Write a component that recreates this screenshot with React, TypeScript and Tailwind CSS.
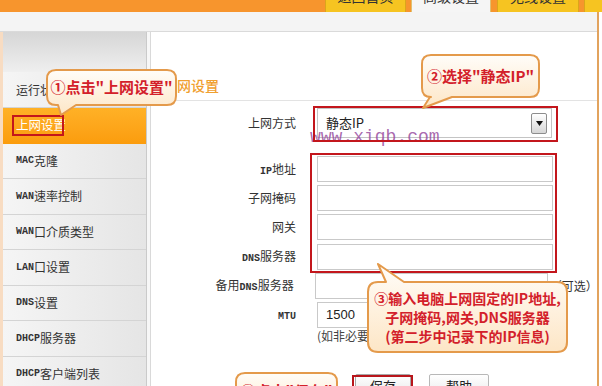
const menu = [
  { zh: '运行状态' },
  { zh: '上网设置', active: true },
  { en: 'MAC', zh: '克隆' },
  { en: 'WAN', zh: '速率控制' },
  { en: 'WAN', zh: '口介质类型' },
  { en: 'LAN', zh: '口设置' },
  { en: 'DNS', zh: '设置' },
  { en: 'DHCP', zh: '服务器' },
  { en: 'DHCP', zh: '客户端列表' },
];

type Tail = { side: 'top' | 'bottom'; a: number; b: number; tx: number; ty: number } | null;

// rounded box with a pointer, used for the orange annotation bubbles
function balloon(x: number, y: number, w: number, h: number, r: number, tail: Tail) {
  const top =
    tail && tail.side === 'top'
      ? `H ${tail.a} L ${tail.tx} ${tail.ty} L ${tail.b} ${y} `
      : '';
  const bottom =
    tail && tail.side === 'bottom'
      ? `H ${tail.b} L ${tail.tx} ${tail.ty} L ${tail.a} ${y + h} `
      : '';
  return (
    `M ${x + r} ${y} ${top}H ${x + w - r} Q ${x + w} ${y} ${x + w} ${y + r} ` +
    `V ${y + h - r} Q ${x + w} ${y + h} ${x + w - r} ${y + h} ${bottom}` +
    `H ${x + r} Q ${x} ${y + h} ${x} ${y + h - r} V ${y + r} Q ${x} ${y} ${x + r} ${y} Z`
  );
}

const Mono = ({ children }: { children: React.ReactNode }) => (
  <span className="font-['Liberation_Mono',monospace] text-[10px] font-bold">{children}</span>
);

const FormRow = ({ label, children }: { label: React.ReactNode; children: React.ReactNode }) => (
  <div className="flex items-center">
    <div className="w-[145px] text-right text-[12px] text-[#333]">{label}</div>
    <div className="ml-[21px] flex items-center">{children}</div>
  </div>
);

const Field = ({ w = 236, value }: { w?: number; value?: string }) => (
  <div
    className="h-[26px] border border-[#c9c9c9] bg-white flex items-center pl-[8px] text-[13px] text-[#222] font-['Liberation_Sans',sans-serif]"
    style={{ width: w }}
  >
    {value}
  </div>
);

export default function App() {
  return (
    <div className="relative w-[602px] h-[386px] overflow-hidden bg-white font-['Noto_Sans_CJK_SC',sans-serif]">
      {/* top bar with tabs, text cut off by the window edge */}
      <div className="h-[12px] bg-[#f7952d] flex items-end pl-[325px] overflow-hidden">
        <div className="w-[81px] h-full bg-[#f6c421] border-x border-[#dba51b] flex justify-center items-end pb-[9px] text-[14px] leading-[14px] text-[#333]">
          返回首页
        </div>
        <div className="ml-[5px] w-[80px] h-full bg-[#f5f5f5] border-x border-[#e0c070] flex justify-center items-end pb-[9px] text-[14px] leading-[14px] text-[#333]">
          高级设置
        </div>
        <div className="ml-[6px] w-[82px] h-full bg-[#f6c421] border-x border-[#dba51b] flex justify-center items-end pb-[9px] text-[14px] leading-[14px] text-[#333]">
          无线设置
        </div>
        <div className="ml-[5px] flex-1 h-full bg-[#f6c421] border-l border-[#dba51b]" />
      </div>

      <div className="flex h-[374px]">
        <div className="w-[597px] flex flex-col">
          <div className="h-[20px] shrink-0 bg-[#f4f4f4] border-b border-[#dadada]" />

          <div className="flex flex-1 min-h-0">
            {/* sidebar */}
            <aside className="w-[147px] overflow-hidden border-l-[3px] border-[#f8dcc2] border-r border-r-[#cacaca] flex flex-col text-[12px] text-[#333]">
              <div className="h-[40px] shrink-0 bg-linear-to-b from-[#d6d6d6] to-[#efefef]" />
              {menu.map((m, i) =>
                m.active ? (
                  <div
                    key={i}
                    className="h-[35.5px] shrink-0 flex items-center pl-[13px] bg-linear-to-b from-[#ffb126] to-[#fb9c0c] text-white text-[12.5px]"
                  >
                    {m.zh}
                  </div>
                ) : (
                  <div
                    key={i}
                    className={`${i === 0 ? 'h-[36px]' : 'h-[35.5px]'} shrink-0 flex items-center pl-[13px] bg-linear-to-r from-[#f5f5f5] to-[#e5e5e5] border-b border-[#d4d4d4]`}
                  >
                    {m.en && <Mono>{m.en}</Mono>}
                    {m.zh}
                  </div>
                )
              )}
            </aside>

            <div className="w-[3px] bg-[#f7f7f7]" />

            {/* content */}
            <section className="flex-1 bg-white border-l border-[#d9d9d9]">
              <div className="h-[69px] flex items-end pl-[12px] pb-[5px] border-b border-[#e3e3e3] text-[14px] leading-[20px] font-medium text-[#f0a030]">
                上网设置
              </div>

              <div className="mt-[7px]">
                <FormRow label="上网方式">
                  <div className="w-[235px] h-[30px] border border-[#c4c4c4] bg-white flex items-center justify-between pl-[8px] pr-[4px] text-[13px] text-[#222]">
                    <span>静态IP</span>
                    <div className="w-[16px] h-[21px] border border-[#8d8d8d] rounded-[2px] bg-linear-to-b from-white to-[#d6d6d6] flex items-center justify-center">
                      <svg width="7" height="5" viewBox="0 0 7 5">
                        <polygon points="0,0 7,0 3.5,5" fill="#111" />
                      </svg>
                    </div>
                  </div>
                </FormRow>
              </div>

              <div className="mt-[18px] flex flex-col gap-[3.2px]">
                <FormRow label={<><Mono>IP</Mono>地址</>}>
                  <Field />
                </FormRow>
                <FormRow label="子网掩码">
                  <Field />
                </FormRow>
                <FormRow label="网关">
                  <Field />
                </FormRow>
                <FormRow label={<><Mono>DNS</Mono>服务器</>}>
                  <Field />
                </FormRow>
                <FormRow label={<>备用<Mono>DNS</Mono>服务器</>}>
                  <Field w={237} />
                  <span className="ml-[2px] text-[12px] text-[#333]">（可选）</span>
                </FormRow>
                <FormRow label={<Mono>MTU</Mono>}>
                  <Field w={110} value="1500" />
                </FormRow>
              </div>
              <div className="pl-[166px] h-[16px] text-[12px] leading-[16px] text-[#444]">
                (如非必要，请勿修改)
              </div>

              <div className="mt-[30px] pl-[204px] flex gap-[18px] text-[13px] text-[#222]">
                <div className="w-[56px] h-[24px] border border-[#a8a8a8] rounded-[2px] bg-linear-to-b from-white to-[#e6e6e6] flex items-center justify-center">
                  保存
                </div>
                <div className="w-[60px] h-[24px] border border-[#b8b8b8] rounded-[2px] bg-linear-to-b from-white to-[#e9e9e9] flex items-center justify-center">
                  帮助
                </div>
              </div>
            </section>
          </div>
        </div>
        <div className="w-[1.5px] bg-[#e2a35e]" />
        <div className="flex-1 bg-white" />
      </div>

      {/* watermark */}
      <div className="absolute left-[310px] top-[128px] font-['Liberation_Mono',monospace] text-[18px] leading-[18px] text-[#93449a]/80">
        www.xiqb.com
      </div>

      {/* red highlight boxes */}
      <div className="absolute left-[12px] top-[115px] w-[52px] h-[21px] border-2 border-[#c3161c]" />
      <div className="absolute left-[313px] top-[106px] w-[245px] h-[36px] border-2 border-[#c3161c]" />
      <div className="absolute left-[310px] top-[153px] w-[247px] h-[120px] border-2 border-[#c3161c]" />
      <div className="absolute left-[352px] top-[375px] w-[61px] h-[24px] border-2 border-[#b8151b]" />

      {/* annotation bubbles */}
      <svg className="absolute left-0 top-0 pointer-events-none" width="602" height="386" viewBox="0 0 602 386">
        <defs>
          <linearGradient id="cg" x1="0" y1="0" x2="0" y2="1">
            <stop offset="0" stopColor="#fffdf9" />
            <stop offset="1" stopColor="#fde6c6" />
          </linearGradient>
        </defs>
        <g fill="url(#cg)" stroke="#e49a4b" strokeWidth="2" strokeLinejoin="round">
          <path d={balloon(47, 70, 129, 35, 9, { side: 'bottom', a: 58, b: 76, tx: 61, ty: 115 })} />
          <path d={balloon(422, 55, 117, 42, 9, { side: 'bottom', a: 430, b: 452, tx: 423, ty: 108 })} />
          <path d={balloon(368, 282, 199, 70, 10, { side: 'top', a: 386, b: 404, tx: 378, ty: 264 })} />
          <path d={balloon(236, 373, 101, 40, 9, null)} />
        </g>
      </svg>

      <div className="absolute left-[47px] top-[70px] w-[129px] h-[35px] flex items-center justify-center whitespace-nowrap text-[15px] font-bold text-[#d3202a]">
        ①点击"上网设置"
      </div>
      <div className="absolute left-[422px] top-[55px] w-[117px] h-[42px] flex items-center justify-center whitespace-nowrap text-[15px] font-bold text-[#d3202a]">
        ②选择"静态IP"
      </div>
      <div className="absolute left-[368px] top-[289px] w-[199px] text-center whitespace-nowrap text-[14px] leading-[19px] font-bold text-[#d3202a]">
        <div>③输入电脑上网固定的IP地址,</div>
        <div>子网掩码,网关,DNS服务器</div>
        <div>(第二步中记录下的IP信息)</div>
      </div>
      <div className="absolute left-[236px] top-[381px] w-[101px] text-center whitespace-nowrap text-[15px] leading-[19px] font-bold text-[#d3202a]">
        ④点击"保存"
      </div>
    </div>
  );
}
